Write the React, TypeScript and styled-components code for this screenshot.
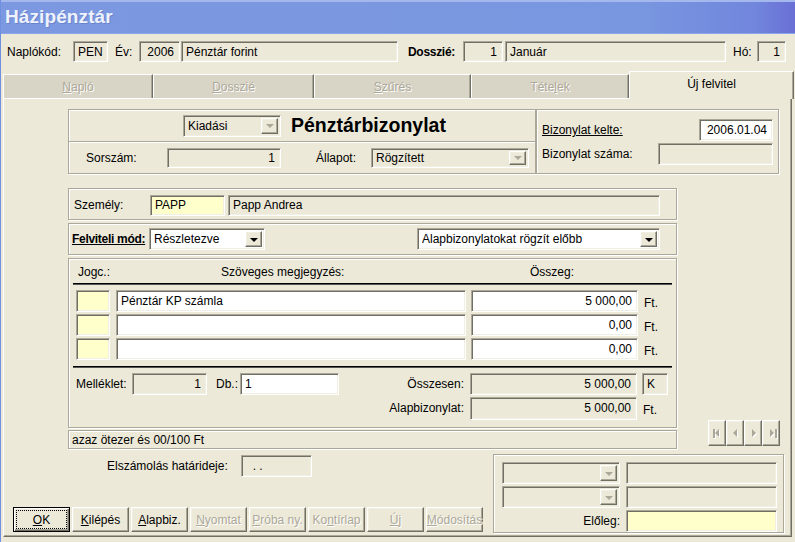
import React from 'react';
import styled, { createGlobalStyle, css } from 'styled-components';

const GlobalStyle = createGlobalStyle`
  html, body {
    margin: 0;
    padding: 0;
    background: #ece9d8;
  }
  body {
    font-family: "Liberation Sans", Arial, sans-serif;
    font-size: 12px;
    color: #000;
  }
  * {
    box-sizing: border-box;
  }
`;

const Window = styled.div`
  width: 795px;
  height: 542px;
  overflow: hidden;
  background: #ece9d8;
  border-left: 1px solid #6f8fe0;
  display: flex;
  flex-direction: column;
`;

const TitleBar = styled.div`
  height: 34px;
  flex-shrink: 0;
  display: flex;
  align-items: center;
  padding-left: 4px;
  background: linear-gradient(to right, #7b98e0 0%, #7997e0 80%, #7186dc 95%, #6a6fd5 100%);
  box-shadow: inset 0 2px 0 #a5b8ee, inset 0 -1px 0 #8aa6e8;
`;

const TitleText = styled.span`
  font-size: 19px;
  font-weight: bold;
  color: #eef2fc;
  text-shadow: 1px 1px 0 #6a84cc;
  letter-spacing: 0.1px;
`;

const Header = styled.div`
  height: 36px;
  flex-shrink: 0;
  display: flex;
  align-items: center;
  padding-left: 6px;
  padding-bottom: 1px;
`;

const Label = styled.span<{ $w?: number; $ml?: number; $bold?: boolean; $u?: boolean; $right?: boolean }>`
  display: inline-block;
  flex-shrink: 0;
  white-space: nowrap;
  width: ${(p) => (p.$w ? `${p.$w}px` : 'auto')};
  margin-left: ${(p) => p.$ml ?? 0}px;
  font-weight: ${(p) => (p.$bold ? 'bold' : 'normal')};
  letter-spacing: ${(p) => (p.$bold ? '-0.3px' : 'normal')};
  text-decoration: ${(p) => (p.$u ? 'underline' : 'none')};
  text-align: ${(p) => (p.$right ? 'right' : 'left')};
`;

const sunken = css`
  border: 1px solid;
  border-color: #aca899 #fff #fff #aca899;
  box-shadow: inset 1px 1px 0 #716f64, inset -1px -1px 0 #f1efe2;
`;

const Field = styled.div<{ $w: number; $h?: number; $ml?: number; $bg?: string; $right?: boolean }>`
  ${sunken};
  flex-shrink: 0;
  width: ${(p) => p.$w}px;
  height: ${(p) => p.$h ?? 21}px;
  margin-left: ${(p) => p.$ml ?? 0}px;
  background: ${(p) => p.$bg ?? '#ece9d8'};
  display: flex;
  align-items: center;
  justify-content: ${(p) => (p.$right ? 'flex-end' : 'flex-start')};
  padding: 0 5px 0 4px;
  white-space: nowrap;
  overflow: hidden;
`;

const SelectBox = styled.div<{ $w: number; $h?: number; $ml?: number; $bg?: string }>`
  ${sunken};
  flex-shrink: 0;
  width: ${(p) => p.$w}px;
  height: ${(p) => p.$h ?? 21}px;
  margin-left: ${(p) => p.$ml ?? 0}px;
  background: ${(p) => p.$bg ?? '#ece9d8'};
  display: flex;
  align-items: center;
  padding: 2px 2px 2px 4px;
`;

const SelectText = styled.span`
  flex: 1;
  white-space: nowrap;
  overflow: hidden;
`;

const raised = css`
  border: 1px solid;
  border-color: #fff #716f64 #716f64 #fff;
  box-shadow: inset -1px -1px 0 #aca899, inset 1px 1px 0 #f1efe2;
  background: #ece9d8;
`;

const DropButton = styled.div`
  ${raised};
  width: 17px;
  height: 100%;
  flex-shrink: 0;
  display: flex;
  align-items: center;
  justify-content: center;
`;

const Arrow = styled.span<{ $disabled?: boolean }>`
  width: 0;
  height: 0;
  border-left: 4px solid transparent;
  border-right: 4px solid transparent;
  border-top: 4px solid ${(p) => (p.$disabled ? '#aca899' : '#000')};
  margin-top: 1px;
`;

const TabBar = styled.div`
  height: 29px;
  flex-shrink: 0;
  display: flex;
  align-items: flex-end;
  margin-left: 2px;
  margin-bottom: -1px;
`;

const Tab = styled.div<{ $w: number; $active?: boolean }>`
  position: relative;
  z-index: ${(p) => (p.$active ? 2 : 0)};
  width: ${(p) => p.$w}px;
  height: ${(p) => (p.$active ? 28 : 25)}px;
  background: ${(p) => (p.$active ? '#ece9d8' : '#d8d4c6')};
  border-top: 1px solid #fff;
  border-left: 1px solid #fff;
  border-right: 1px solid #716f64;
  box-shadow: inset -1px 0 0 #aca899;
  display: flex;
  align-items: center;
  justify-content: center;
  padding-bottom: ${(p) => (p.$active ? 4 : 0)}px;
  color: ${(p) => (p.$active ? '#000' : '#aca899')};
  text-shadow: ${(p) => (p.$active ? 'none' : '1px 1px 0 #fff')};
`;

const Mn = styled.span`
  text-decoration: underline;
`;

const Panel = styled.div`
  position: relative;
  z-index: 1;
  margin-left: 2px;
  width: 789px;
  height: 439px;
  flex-shrink: 0;
  border: 1px solid;
  border-color: #fff #716f64 #716f64 #fff;
  box-shadow: inset -1px -1px 0 #aca899;
  display: flex;
  flex-direction: column;
  padding-top: 10px;
`;

const etched = css`
  border: 1px solid #aca899;
  box-shadow: inset 1px 1px 0 #fff, 1px 1px 0 #fff;
`;

const TopGroups = styled.div`
  display: flex;
  margin-left: 64px;
  height: 65px;
`;

const Group = styled.div<{ $w: number; $h: number }>`
  ${etched};
  width: ${(p) => p.$w}px;
  height: ${(p) => p.$h}px;
  flex-shrink: 0;
  display: flex;
  flex-direction: column;
`;

const GroupRow = styled.div<{ $h: number; $pl?: number; $pt?: number; $line?: boolean }>`
  height: ${(p) => p.$h}px;
  flex-shrink: 0;
  display: flex;
  align-items: center;
  padding-left: ${(p) => p.$pl ?? 0}px;
  padding-top: ${(p) => p.$pt ?? 0}px;
  ${(p) =>
    p.$line &&
    css`
      border-bottom: 1px solid #aca899;
      box-shadow: 0 1px 0 #fff;
    `}
`;

const DocTitle = styled.span`
  margin-left: 10px;
  font-size: 19.5px;
  font-weight: bold;
  white-space: nowrap;
`;

const KeltRow = styled.div<{ $mt: number }>`
  display: flex;
  align-items: center;
  justify-content: space-between;
  padding: 0 5px 0 5px;
  margin-top: ${(p) => p.$mt}px;
`;

const MiddleRow = styled.div`
  display: flex;
  margin-left: 64px;
  margin-top: 14px;
`;

const LeftCol = styled.div`
  width: 609px;
  display: flex;
  flex-direction: column;
  gap: 3px;
`;

const TableHead = styled.div`
  height: 25px;
  margin: 0 4px 0 4px;
  border-bottom: 1px solid #000;
  box-shadow: 0 1px 0 #555;
  display: grid;
  grid-template-columns: 40px 354px 160px;
  align-items: center;
  padding-left: 5px;
  padding-top: 2px;
`;

const HeadCell = styled.span<{ $pl?: number; $center?: boolean }>`
  padding-left: ${(p) => p.$pl ?? 0}px;
  text-align: ${(p) => (p.$center ? 'center' : 'left')};
  white-space: nowrap;
`;

const ItemRows = styled.div`
  display: flex;
  flex-direction: column;
  gap: 2px;
  padding: 6px 0 0 7px;
`;

const ItemRow = styled.div`
  display: flex;
  align-items: center;
  height: 22px;
`;

const UnitCell = styled.span`
  width: 31px;
  flex-shrink: 0;
  padding-left: 6px;
  padding-top: 3px;
`;

const Separator = styled.div`
  margin: 6px 4px 0 4px;
  height: 1px;
  background: #000;
  box-shadow: 0 1px 0 #555;
`;

const SumRow = styled.div<{ $mt: number }>`
  display: flex;
  align-items: center;
  height: 22px;
  margin-top: ${(p) => p.$mt}px;
  padding: 0 8px 0 7px;
`;

const SumLabel = styled.span`
  flex: 1;
  text-align: right;
  padding-right: 6px;
  white-space: nowrap;
`;

const WordsBox = styled.div`
  ${etched};
  margin-top: -1px;
  height: 19px;
  display: flex;
  align-items: center;
  padding-left: 3px;
`;

const NavGroup = styled.div`
  align-self: flex-end;
  margin: 0 0 3px 31px;
  display: flex;
`;

const NavButton = styled.div`
  ${raised};
  width: 18px;
  height: 26px;
  display: flex;
  align-items: center;
  justify-content: center;
`;

const LowerRow = styled.div`
  display: flex;
  margin-top: 5px;
  height: 79px;
`;

const LowerLeft = styled.div`
  width: 489px;
  display: flex;
  flex-direction: column;
  justify-content: space-between;
  padding-bottom: 1px;
`;

const DeadlineRow = styled.div`
  display: flex;
  align-items: center;
  padding-left: 103px;
  margin-top: 1px;
`;

const ButtonBar = styled.div`
  display: flex;
  gap: 2px;
  padding-left: 9px;
`;

const Button = styled.div<{ $disabled?: boolean; $default?: boolean }>`
  ${raised};
  width: 57px;
  height: 25px;
  display: flex;
  align-items: center;
  justify-content: center;
  white-space: nowrap;
  color: ${(p) => (p.$disabled ? '#aca899' : '#000')};
  text-shadow: ${(p) => (p.$disabled ? '1px 1px 0 #fff' : 'none')};
  ${(p) =>
    p.$default &&
    css`
      border: 1px solid #000;
      box-shadow: inset 1px 1px 0 #fff, inset -1px -1px 0 #716f64, inset -2px -2px 0 #aca899;
    `}
`;

const FocusRect = styled.span`
  border: 1px dotted #000;
  width: 51px;
  height: 19px;
  display: flex;
  align-items: center;
  justify-content: center;
`;

const ExtraGroup = styled.div`
  ${etched};
  width: 291px;
  height: 79px;
  display: flex;
  flex-direction: column;
  gap: 2px;
  padding: 7px 0 0 8px;
`;

const ExtraRow = styled.div`
  display: flex;
  align-items: center;
  gap: 6px;
`;

const NavIcon = ({ kind }: { kind: 'first' | 'prev' | 'next' | 'last' }) => {
  const left = kind === 'first' || kind === 'prev';
  const bar = kind === 'first' || kind === 'last';
  const tri = left ? 'M8 3 L4 7 L8 11 Z' : 'M5 3 L9 7 L5 11 Z';
  const barX = kind === 'first' ? 2 : 10;
  const draw = (dx: number, color: string) => (
    <g transform={`translate(${dx},${dx})`} fill={color}>
      <path d={tri} />
      {bar && <rect x={barX} y={3} width={2} height={9} />}
    </g>
  );
  return (
    <svg width="13" height="14" viewBox="0 0 13 14">
      {draw(1, '#fff')}
      {draw(0, '#aca899')}
    </svg>
  );
};

const Select = ({
  w,
  h,
  ml,
  bg,
  text,
  disabled,
}: {
  w: number;
  h?: number;
  ml?: number;
  bg?: string;
  text?: string;
  disabled?: boolean;
}) => (
  <SelectBox $w={w} $h={h} $ml={ml} $bg={bg}>
    <SelectText>{text}</SelectText>
    <DropButton>
      <Arrow $disabled={disabled} />
    </DropButton>
  </SelectBox>
);

const items = [
  { text: 'Pénztár KP számla', amount: '5 000,00' },
  { text: '', amount: '0,00' },
  { text: '', amount: '0,00' },
];

export default function App() {
  return (
    <>
      <GlobalStyle />
      <Window>
        <TitleBar>
          <TitleText>Házipénztár</TitleText>
        </TitleBar>

        <Header>
          <Label $w={66}>Naplókód:</Label>
          <Field $w={35}>PEN</Field>
          <Label $w={24} $ml={7}>Év:</Label>
          <Field $w={41} $right>2006</Field>
          <Field $w={217} $ml={1}>Pénztár forint</Field>
          <Label $w={55} $ml={10} $bold>Dosszié:</Label>
          <Field $w={40} $right>1</Field>
          <Field $w={221} $ml={2}>Január</Field>
          <Label $w={24} $ml={7}>Hó:</Label>
          <Field $w={29} $right>1</Field>
        </Header>

        <TabBar>
          <Tab $w={150}><span><Mn>N</Mn>apló</span></Tab>
          <Tab $w={161}><span><Mn>D</Mn>osszié</span></Tab>
          <Tab $w={157}><span><Mn>S</Mn>zűrés</span></Tab>
          <Tab $w={158}><span>Téte<Mn>l</Mn>ek</span></Tab>
          <Tab $w={165} $active>Új felvitel</Tab>
        </TabBar>

        <Panel>
          <TopGroups>
            <Group $w={468} $h={65}>
              <GroupRow $h={32} $pl={114} $line>
                <Select w={98} h={22} text="Kiadási" disabled />
                <DocTitle>Pénztárbizonylat</DocTitle>
              </GroupRow>
              <GroupRow $h={31} $pl={17}>
                <Label $w={81}>Sorszám:</Label>
                <Field $w={114} $h={20} $right>1</Field>
                <Label $w={55} $ml={35}>Állapot:</Label>
                <Select w={158} h={20} text="Rögzített" disabled />
              </GroupRow>
            </Group>
            <Group $w={243} $h={65}>
              <KeltRow $mt={9}>
                <Label $u>Bizonylat kelte:</Label>
                <Field $w={74} $h={22} $bg="#fff" $right>2006.01.04</Field>
              </KeltRow>
              <KeltRow $mt={2}>
                <Label>Bizonylat száma:</Label>
                <Field $w={115} $h={22} />
              </KeltRow>
            </Group>
          </TopGroups>

          <MiddleRow>
            <LeftCol>
              <Group $w={609} $h={32}>
                <GroupRow $h={30} $pl={5} $pt={2}>
                  <Label $w={76}>Személy:</Label>
                  <Field $w={75} $bg="#ffffcc">PAPP</Field>
                  <Field $w={432} $ml={3}>Papp Andrea</Field>
                </GroupRow>
              </Group>

              <Group $w={609} $h={32}>
                <GroupRow $h={30} $pl={3}>
                  <Label $w={77} $bold $u>Felviteli mód:</Label>
                  <Select w={116} h={22} bg="#fff" text="Részletezve" />
                  <Select w={243} h={22} ml={152} bg="#fff" text="Alapbizonylatokat rögzít előbb" />
                </GroupRow>
              </Group>

              <Group $w={609} $h={170}>
                <TableHead>
                  <HeadCell>Jogc.:</HeadCell>
                  <HeadCell $pl={103}>Szöveges megjegyzés:</HeadCell>
                  <HeadCell $center>Összeg:</HeadCell>
                </TableHead>
                <ItemRows>
                  {items.map((it, i) => (
                    <ItemRow key={i}>
                      <Field $w={34} $h={22} $bg="#ffffcc" />
                      <Field $w={350} $h={22} $ml={6} $bg="#fff">{it.text}</Field>
                      <Field $w={167} $h={22} $ml={5} $bg="#fff" $right>{it.amount}</Field>
                      <UnitCell>Ft.</UnitCell>
                    </ItemRow>
                  ))}
                </ItemRows>
                <Separator />
                <SumRow $mt={6}>
                  <Label $w={56}>Melléklet:</Label>
                  <Field $w={75} $h={22} $right>1</Field>
                  <Label $w={24} $ml={9}>Db.:</Label>
                  <Field $w={99} $h={22} $bg="#fff">1</Field>
                  <SumLabel>Összesen:</SumLabel>
                  <Field $w={167} $h={22} $right>5 000,00</Field>
                  <Field $w={26} $h={22} $ml={5}>K</Field>
                </SumRow>
                <SumRow $mt={2}>
                  <SumLabel>Alapbizonylat:</SumLabel>
                  <Field $w={167} $h={23} $right>5 000,00</Field>
                  <UnitCell>Ft.</UnitCell>
                </SumRow>
              </Group>

              <WordsBox>azaz ötezer és 00/100 Ft</WordsBox>
            </LeftCol>

            <NavGroup>
              <NavButton><NavIcon kind="first" /></NavButton>
              <NavButton><NavIcon kind="prev" /></NavButton>
              <NavButton><NavIcon kind="next" /></NavButton>
              <NavButton><NavIcon kind="last" /></NavButton>
            </NavGroup>
          </MiddleRow>

          <LowerRow>
            <LowerLeft>
              <DeadlineRow>
                <Label $w={134}>Elszámolás határideje:</Label>
                <Field $w={71} $h={22}>&nbsp;&nbsp;. .</Field>
              </DeadlineRow>
              <ButtonBar>
                <Button $default>
                  <FocusRect><Mn>O</Mn>K</FocusRect>
                </Button>
                <Button><span><Mn>K</Mn>ilépés</span></Button>
                <Button><span><Mn>A</Mn>lapbiz.</span></Button>
                <Button $disabled><span><Mn>N</Mn>yomtat</span></Button>
                <Button $disabled><span><Mn>P</Mn>róba ny.</span></Button>
                <Button $disabled><span>Ko<Mn>n</Mn>tírlap</span></Button>
                <Button $disabled><span><Mn>Ú</Mn>j</span></Button>
                <Button $disabled><span><Mn>M</Mn>ódosítás</span></Button>
              </ButtonBar>
            </LowerLeft>

            <ExtraGroup>
              <ExtraRow>
                <Select w={118} h={22} disabled />
                <Field $w={151} $h={22} />
              </ExtraRow>
              <ExtraRow>
                <Select w={118} h={22} disabled />
                <Field $w={151} $h={22} />
              </ExtraRow>
              <ExtraRow>
                <Label $w={118} $right>Előleg:</Label>
                <Field $w={151} $h={22} $bg="#ffffcc" />
              </ExtraRow>
            </ExtraGroup>
          </LowerRow>
        </Panel>
      </Window>
    </>
  );
}
